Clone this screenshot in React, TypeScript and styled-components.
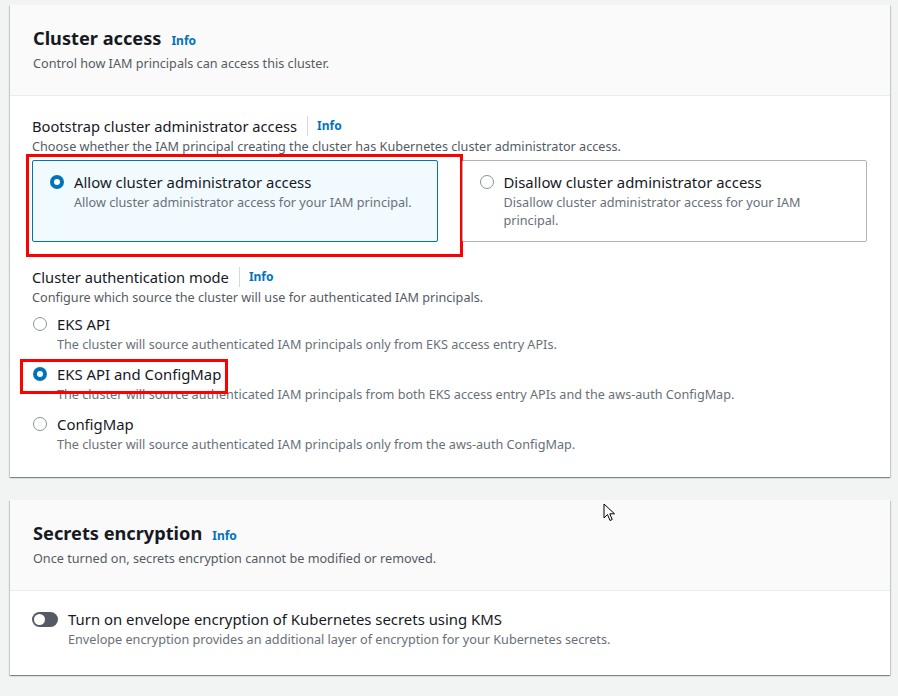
import { ReactElement, ReactNode } from "react";
import styled, { createGlobalStyle } from "styled-components";

const GlobalStyle = createGlobalStyle`
  html, body {
    margin: 0;
    padding: 0;
    background: #f2f3f3;
    font-family: "Noto Sans", "Open Sans", Arial, sans-serif;
    color: #16191f;
  }
`;

const Page = styled.div`
  width: 898px;
  height: 696px;
  box-sizing: border-box;
  padding: 5px 8px 0 10px;
  display: flex;
  flex-direction: column;
  gap: 23px;
  overflow: hidden;
`;

const Card = styled.section`
  position: relative;
  background: #fff;
  box-shadow: 0 1px 1px 0 rgba(0, 28, 36, 0.3), 1px 1px 1px 0 rgba(0, 28, 36, 0.15),
    -1px 1px 1px 0 rgba(0, 28, 36, 0.15);
`;

const CardHeader = styled.header`
  background: #fafafa;
  border-bottom: 1px solid #eaeded;
  padding: 21px 23px 23px 23px;
`;

const TitleRow = styled.div`
  display: flex;
  align-items: baseline;
  gap: 10px;
  height: 24px;
`;

const Title = styled.h2`
  margin: 0;
  font-size: 18.2px;
  line-height: 24px;
  font-weight: 700;
  color: #16191f;
`;

const InfoLink = styled.a<{ $divided?: boolean }>`
  font-size: 12px;
  font-weight: 700;
  color: #0073bb;
  text-decoration: none;
  line-height: 20px;
  ${(p) => (p.$divided ? "border-left: 1px solid #d5dbdb; padding-left: 9px;" : "")}
`;

const HeaderDesc = styled.p`
  margin: 4px 0 0;
  font-size: 12.65px;
  line-height: 18px;
  color: #545b64;
`;

const CardBody = styled.div<{ $pad: string }>`
  padding: ${(p) => p.$pad};
`;

const FieldLabelRow = styled.div<{ $top?: number }>`
  display: flex;
  align-items: center;
  gap: 10px;
  height: 20px;
  margin-top: ${(p) => p.$top ?? 0}px;
`;

const FieldLabel = styled.span`
  font-size: 14.7px;
  line-height: 20px;
  color: #16191f;
`;

const FieldDesc = styled.p`
  margin: 1px 0 0;
  font-size: 12.65px;
  line-height: 18px;
  color: #545b64;
`;

const Tiles = styled.div`
  display: grid;
  grid-template-columns: 1fr 1fr;
  gap: 24px;
  margin-top: 5px;
`;

const Tile = styled.div<{ $selected?: boolean }>`
  position: relative;
  height: 82px;
  box-sizing: border-box;
  border: 1px solid ${(p) => (p.$selected ? "#0073bb" : "#aab7b8")};
  background: ${(p) => (p.$selected ? "#f1faff" : "#fff")};
  border-radius: 2px;
  padding: 10px 20px 0 17px;
`;

const OptionRow = styled.div`
  position: relative;
  display: flex;
  gap: 10px;
  align-items: flex-start;
`;

const Radio = styled.span<{ $checked?: boolean }>`
  flex: none;
  width: 14px;
  height: 14px;
  margin-top: 4px;
  box-sizing: border-box;
  border-radius: 50%;
  background: #fff;
  border: ${(p) => (p.$checked ? "4px solid #0073bb" : "1.5px solid #879596")};
`;

const OptionText = styled.div`
  display: flex;
  flex-direction: column;
`;

const OptionLabel = styled.span`
  font-size: 14.9px;
  line-height: 22px;
  color: #16191f;
`;

const OptionDesc = styled.span`
  font-size: 12.65px;
  line-height: 18px;
  color: #687078;
`;

const RadioList = styled.div`
  display: flex;
  flex-direction: column;
  gap: 10px;
  margin-top: 7px;
  padding-left: 1px;
`;

const Toggle = styled.span`
  flex: none;
  position: relative;
  width: 26px;
  height: 15px;
  margin-top: 4px;
  border-radius: 8px;
  background: #545b64;
  &::after {
    content: "";
    position: absolute;
    left: 2px;
    top: 2px;
    width: 11px;
    height: 11px;
    border-radius: 50%;
    background: #fff;
  }
`;

const Annotation = styled.div<{ $l: number; $t: number; $w: number; $h: number }>`
  position: absolute;
  left: ${(p) => p.$l}px;
  top: ${(p) => p.$t}px;
  width: ${(p) => p.$w}px;
  height: ${(p) => p.$h}px;
  box-sizing: border-box;
  border: 3px solid #ff0000;
  pointer-events: none;
`;

const Cursor = styled.svg`
  position: absolute;
  left: 593px;
  top: 3px;
`;

interface OptionProps {
  label: string;
  desc: ReactNode;
  checked?: boolean;
  children?: ReactNode;
}

function RadioOption({ label, desc, checked, children }: OptionProps): ReactElement {
  return (
    <OptionRow>
      <Radio $checked={checked} />
      <OptionText>
        <OptionLabel>{label}</OptionLabel>
        <OptionDesc>{desc}</OptionDesc>
      </OptionText>
      {children}
    </OptionRow>
  );
}

export default function App(): ReactElement {
  return (
    <>
      <GlobalStyle />
      <Page>
        <Card>
          <CardHeader>
            <TitleRow>
              <Title>Cluster access</Title>
              <InfoLink>Info</InfoLink>
            </TitleRow>
            <HeaderDesc>Control how IAM principals can access this cluster.</HeaderDesc>
          </CardHeader>
          <CardBody $pad="20px 23px 24px 22px">
            <FieldLabelRow>
              <FieldLabel>Bootstrap cluster administrator access</FieldLabel>
              <InfoLink $divided>Info</InfoLink>
            </FieldLabelRow>
            <FieldDesc>
              Choose whether the IAM principal creating the cluster has Kubernetes cluster administrator access.
            </FieldDesc>
            <Tiles>
              <Tile $selected>
                <RadioOption
                  checked
                  label="Allow cluster administrator access"
                  desc="Allow cluster administrator access for your IAM principal."
                />
                <Annotation $l={-7} $t={-7} $w={437} $h={103} />
              </Tile>
              <Tile>
                <RadioOption
                  label="Disallow cluster administrator access"
                  desc={
                    <>
                      Disallow cluster administrator access for your IAM
                      <br />
                      principal.
                    </>
                  }
                />
              </Tile>
            </Tiles>

            <FieldLabelRow $top={25}>
              <FieldLabel>Cluster authentication mode</FieldLabel>
              <InfoLink $divided>Info</InfoLink>
            </FieldLabelRow>
            <FieldDesc>Configure which source the cluster will use for authenticated IAM principals.</FieldDesc>
            <RadioList>
              <RadioOption
                label="EKS API"
                desc="The cluster will source authenticated IAM principals only from EKS access entry APIs."
              />
              <RadioOption
                checked
                label="EKS API and ConfigMap"
                desc="The cluster will source authenticated IAM principals from both EKS access entry APIs and the aws-auth ConfigMap."
              >
                <Annotation $l={-13} $t={-4} $w={208} $h={35} />
              </RadioOption>
              <RadioOption
                label="ConfigMap"
                desc="The cluster will source authenticated IAM principals only from the aws-auth ConfigMap."
              />
            </RadioList>
          </CardBody>
        </Card>

        <Card>
          <CardHeader>
            <TitleRow>
              <Title>Secrets encryption</Title>
              <InfoLink>Info</InfoLink>
            </TitleRow>
            <HeaderDesc>Once turned on, secrets encryption cannot be modified or removed.</HeaderDesc>
          </CardHeader>
          <CardBody $pad="17px 23px 27px 22px">
            <OptionRow>
              <Toggle />
              <OptionText>
                <OptionLabel>Turn on envelope encryption of Kubernetes secrets using KMS</OptionLabel>
                <OptionDesc>
                  Envelope encryption provides an additional layer of encryption for your Kubernetes secrets.
                </OptionDesc>
              </OptionText>
            </OptionRow>
          </CardBody>
          <Cursor width="13" height="20" viewBox="0 0 13 20">
            <path
              d="M1 1 L1 15 L4.5 11.5 L7 17.5 L9.2 16.5 L6.8 10.8 L11.5 10.8 Z"
              fill="#fff"
              stroke="#000"
              strokeWidth="1"
              strokeLinejoin="round"
            />
          </Cursor>
        </Card>
      </Page>
    </>
  );
}
